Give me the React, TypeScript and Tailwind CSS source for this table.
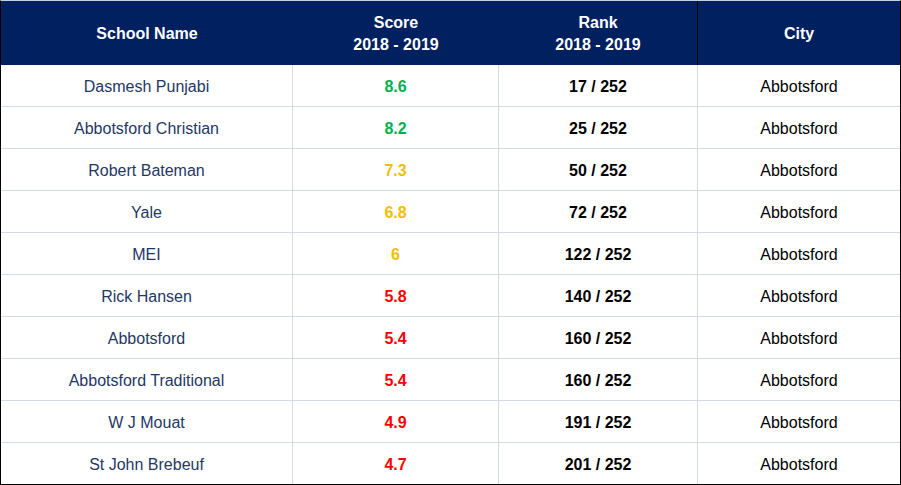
const rows = [
  { name: "Dasmesh Punjabi", score: "8.6", rank: "17 / 252", tone: "green" },
  { name: "Abbotsford Christian", score: "8.2", rank: "25 / 252", tone: "green" },
  { name: "Robert Bateman", score: "7.3", rank: "50 / 252", tone: "yellow" },
  { name: "Yale", score: "6.8", rank: "72 / 252", tone: "yellow" },
  { name: "MEI", score: "6", rank: "122 / 252", tone: "yellow" },
  { name: "Rick Hansen", score: "5.8", rank: "140 / 252", tone: "red" },
  { name: "Abbotsford", score: "5.4", rank: "160 / 252", tone: "red" },
  { name: "Abbotsford Traditional", score: "5.4", rank: "160 / 252", tone: "red" },
  { name: "W J Mouat", score: "4.9", rank: "191 / 252", tone: "red" },
  { name: "St John Brebeuf", score: "4.7", rank: "201 / 252", tone: "red" },
];

const toneClass: Record<string, string> = {
  green: "text-[#00b050]",
  yellow: "text-[#efc000]",
  red: "text-[#ff0000]",
};

export default function App() {
  return (
    <div className="w-[901px] h-[485px] bg-white font-['Liberation_Sans',Arial,sans-serif] text-[16px]">
      <div className="border-t border-t-[#c5d0de] border-l border-r border-b border-l-black border-r-black border-b-black">
        {/* header */}
        <div className="grid grid-cols-[292px_206px_199px_1fr] h-[64px] bg-[#00205f] text-white font-bold leading-[22px]">
          <div className="flex items-center justify-center pt-[2px]">School Name</div>
          <div className="flex flex-col items-center justify-center pt-[2px]">
            <span>Score</span>
            <span>2018 - 2019</span>
          </div>
          <div className="flex flex-col items-center justify-center pt-[2px] border-r border-black">
            <span>Rank</span>
            <span>2018 - 2019</span>
          </div>
          <div className="flex items-center justify-center pt-[2px]">City</div>
        </div>
        {rows.map((r, i) => (
          <div
            key={i}
            className={`grid grid-cols-[292px_206px_199px_1fr] ${i < rows.length - 1 ? "h-[42px] border-b border-[#d3dae6]" : "h-[41px]"}`}
          >
            <div className="flex items-center justify-center pt-[2px] border-r border-[#d3dae6] text-[#1f3864]">{r.name}</div>
            <div className={`flex items-center justify-center pt-[2px] border-r border-[#d3dae6] font-bold ${toneClass[r.tone]}`}>{r.score}</div>
            <div className="flex items-center justify-center pt-[2px] border-r border-[#d3dae6] font-bold text-black">{r.rank}</div>
            <div className="flex items-center justify-center pt-[2px] text-black">Abbotsford</div>
          </div>
        ))}
      </div>
    </div>
  );
}
